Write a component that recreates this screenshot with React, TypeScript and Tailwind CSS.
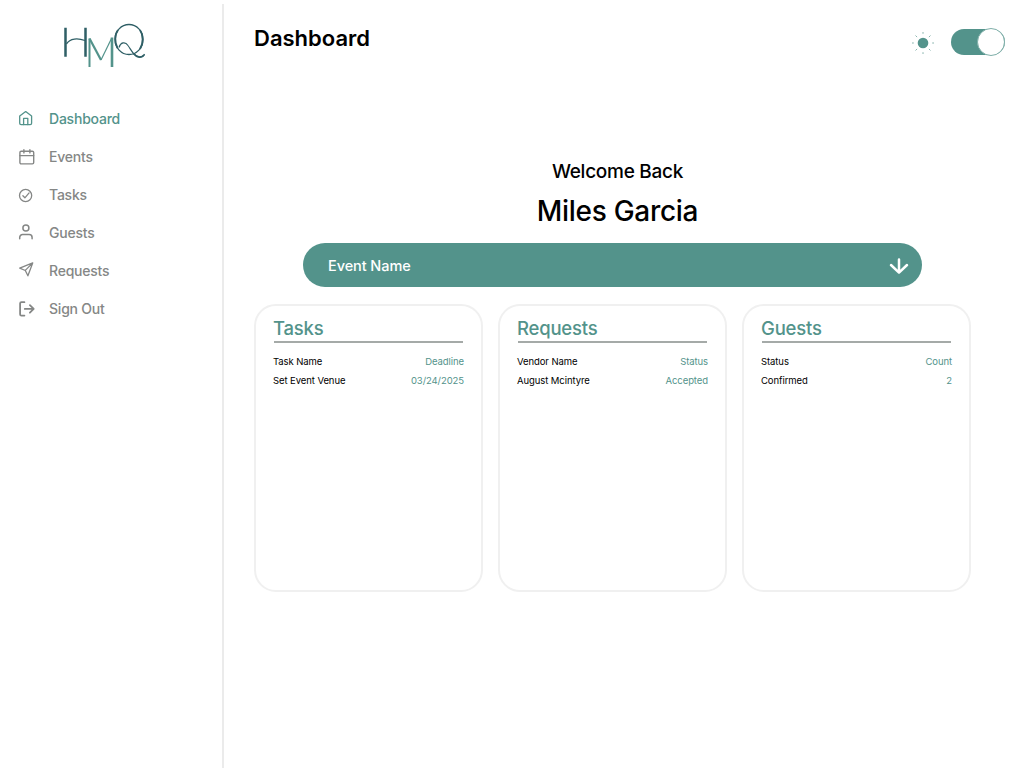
import type { ReactNode } from "react";

type NavItem = { label: string; icon: ReactNode; active?: boolean };

const stroke = {
  fill: "none",
  stroke: "currentColor",
  strokeLinecap: "round" as const,
  strokeLinejoin: "round" as const,
};

const navItems: NavItem[] = [
  {
    label: "Dashboard",
    active: true,
    icon: (
      <svg width="20" height="20" viewBox="0 0 20 20" {...stroke} strokeWidth="1.3">
        <path d="M2.700 8 8.700 3.600 14.600 8V15.300a1.400 1.400 0 0 1-1.400 1.400H4.100A1.400 1.400 0 0 1 2.700 15.300Z" />
        <path d="M6.600 16.500V10.300h4.200v6.200" />
      </svg>
    ),
  },
  {
    label: "Events",
    icon: (
      <svg width="20" height="20" viewBox="0 0 20 20" {...stroke} strokeWidth="1.400">
        <rect x="2.900" y="5.300" width="13.800" height="12.600" rx="1.300" />
        <path d="M2.900 9.600h13.800M6.900 3.700v3.200M12.900 3.700v3.200" />
      </svg>
    ),
  },
  {
    label: "Tasks",
    icon: (
      <svg width="20" height="20" viewBox="0 0 20 20" {...stroke} strokeWidth="1.300">
        <circle cx="8.600" cy="11.500" r="6.100" />
        <path d="m5.900 11.800 2 2 4.200-4.900" />
      </svg>
    ),
  },
  {
    label: "Guests",
    icon: (
      <svg width="20" height="20" viewBox="0 0 20 20" {...stroke} strokeWidth="1.500">
        <circle cx="8.900" cy="5.900" r="3" />
        <path d="M2.700 16.700v-1.300a2.900 2.900 0 0 1 2.900-2.900h6.600a2.900 2.900 0 0 1 2.900 2.900v1.300" />
      </svg>
    ),
  },
  {
    label: "Requests",
    icon: (
      <svg width="20" height="20" viewBox="0 0 20 20" {...stroke} strokeWidth="1.300">
        <path d="M15.700 2.900 2.700 8.100l5.600 2.400 2.600 5.300ZM15.700 2.900 8.300 10.400" />
      </svg>
    ),
  },
  {
    label: "Sign Out",
    icon: (
      <svg width="20" height="20" viewBox="0 0 20 20" {...stroke} strokeWidth="1.800">
        <path d="M7.400 4.200H4.500a1.400 1.400 0 0 0-1.400 1.400v10.600a1.400 1.400 0 0 0 1.400 1.400h2.900M7.800 10.900h8.500M12.900 7.100l3.800 3.800-3.800 3.800" />
      </svg>
    ),
  },
];

const cards = [
  { title: "Tasks", rows: [["Task Name", "Deadline"], ["Set Event Venue", "03/24/2025"]] },
  { title: "Requests", rows: [["Vendor Name", "Status"], ["August Mcintyre", "Accepted"]] },
  { title: "Guests", rows: [["Status", "Count"], ["Confirmed", "2"]] },
];

function Logo() {
  return (
    <svg width="84" height="46" viewBox="0 0 84 46" fill="none" role="img" aria-label="HMQ">
      <g stroke="#2f5f66">
        <path d="M3.500 4.800v29M23.500 4.800v29" strokeWidth="2.500" />
        <path d="M4.500 21C8 15 16 15 23 17.500" strokeWidth="1.300" />
        <ellipse cx="67" cy="16.500" rx="14" ry="15" strokeWidth="1.300" />
        <path d="M56 7C52.500 11.500 52.500 20 55.500 25M78 7c3.500 5 3.500 13 0 19" strokeWidth="1.800" />
        <path d="M57 24.500c1.500-5 6-6.500 9-2 3 4 5.500 11 11 11.500 3 0 5-1 5.500-3" strokeWidth="1.200" />
        <path d="M71.500 30.500c3.500 4.500 8.500 4.500 10.500 1.500" strokeWidth="1.700" />
      </g>
      <g stroke="#53938b" strokeLinejoin="miter">
        <path d="M27.500 44V15.500" strokeWidth="2" />
        <path d="m27.500 15.500 11.500 21.500" strokeWidth="2.200" />
        <path d="M39 37 49.500 15.500" strokeWidth="1.200" />
        <path d="M50 44V14.500" strokeWidth="2.600" />
      </g>
    </svg>
  );
}

function Sun() {
  return (
    <svg width="24" height="24" viewBox="0 0 24 24" fill="none">
      <circle cx="12" cy="12" r="5.300" fill="#53938b" />
      <path d="M12 1v1.800M12 21.200V23M1 12h1.800M21.200 12H23M4.500 4.500l1.600 1.600M17.900 17.900l1.600 1.600M4.500 19.500l1.600-1.600M17.900 6.100l1.600-1.600" stroke="#53938b" strokeOpacity="0.750" strokeWidth="0.900" />
    </svg>
  );
}

export default function App() {
  return (
    <div className="flex h-[768px] w-[1024px] overflow-hidden bg-white font-['Inter',sans-serif] text-black">
      <aside className="flex w-[222px] shrink-0 flex-col">
        <div className="ml-[62px] mt-[23px] h-[46px]">
          <Logo />
        </div>
        <nav className="mt-[30px] flex flex-col">
          {navItems.map((item) => (
            <a
              key={item.label}
              className={`flex h-[38px] items-center pl-[17px] text-[14px] font-medium tracking-[-0.22px] ${item.active ? "text-[#53938b]" : "text-[#858786]"}`}
            >
              <span className="mr-3 w-5">{item.icon}</span>
              {item.label}
            </a>
          ))}
        </nav>
      </aside>
      <div className="mt-1 w-[2px] shrink-0 bg-[#ebebeb]" />
      <main className="flex flex-1 flex-col">
        <header className="flex h-[84px] justify-between pl-[30px] pr-[19px]">
          <h1 className="mt-[22px] h-8 text-[22px] font-semibold leading-8">Dashboard</h1>
          <div className="mt-[28px] flex h-7 items-center">
            <div className="mr-4 mt-[2px]">
              <Sun />
            </div>
            <button className="flex h-[26px] w-[54px] items-center justify-end rounded-full bg-[#53938b]">
              <span className="h-7 w-7 shrink-0 rounded-full border border-[#7fafa9] bg-white" />
            </button>
          </div>
        </header>
        <section className="mt-[72px] flex w-[787px] flex-col items-center">
          <p className="h-8 text-[19px] font-medium leading-8 tracking-[-0.27px]">Welcome Back</p>
          <p className="mt-[3px] h-10 text-[28px] font-[450] leading-10 tracking-[-0.3px]">Miles Garcia</p>
        </section>
        <button className="ml-[79px] mt-[12px] flex h-[44px] w-[619px] shrink-0 items-center justify-between rounded-full bg-[#53938b] pl-[25px] pr-[13px] text-white">
          <span className="mt-[2px] text-[14.500px] font-medium tracking-[-0.08px]">Event Name</span>
          <svg width="20" height="20" viewBox="0 0 20 20" {...stroke} strokeWidth="2.500" className="mt-[2px]">
            <path d="M10 3.400v13.200M2 9l8 7.600 8-7.600" />
          </svg>
        </button>
        <section className="ml-[30px] mt-[17px] flex gap-[15px]">
          {cards.map((card) => (
            <article key={card.title} className="h-[288px] w-[229px] rounded-[22px] border-2 border-[#f0f0f0] px-[17px] pt-2">
              <h2 className="h-7 text-[18.500px] font-medium leading-7 tracking-[-0.2px] text-[#53938b]">{card.title}</h2>
              <div className="ml-[1px] mt-[-1px] h-[2px] w-[189px] bg-[#a5aaa8]" />
              <dl className="mt-[9px] text-[9.500px] tracking-[-0.08px]">
                {card.rows.map(([name, value]) => (
                  <div key={name} className="flex h-[19.500px] items-center justify-between">
                    <dt>{name}</dt>
                    <dd className="text-[#53938b]">{value}</dd>
                  </div>
                ))}
              </dl>
            </article>
          ))}
        </section>
      </main>
    </div>
  );
}
